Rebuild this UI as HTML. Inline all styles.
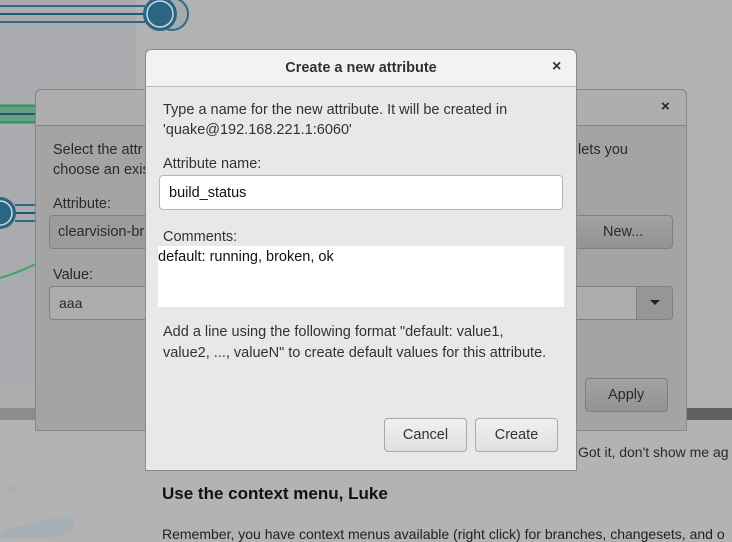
<!DOCTYPE html>
<html><head><style>
*{box-sizing:border-box;margin:0;padding:0}
body{width:732px;height:538px;overflow:hidden;background:#b3b3b3;font-family:"Liberation Sans","DejaVu Sans",sans-serif;font-size:14.5px;color:#2e3436;position:relative}
.a{position:absolute}
.t{position:absolute;white-space:nowrap}
</style></head><body>
<div class="a" style="left:0;top:0;width:136px;height:385px;background:#a9abaf"></div>
<div class="a" style="left:136px;top:0;width:596px;height:408px;background:#b2b2b2"></div>
<div class="a" style="left:0;top:385px;width:136px;height:23px;background:#adadad"></div>
<div class="a" style="left:0;top:408px;width:40px;height:12px;background:#8b8c8c"></div>
<div class="a" style="left:680px;top:408px;width:52px;height:12px;background:#5e6163"></div>
<svg class="a" style="left:0;top:0" width="200" height="330">
<line x1="0" y1="6" x2="145" y2="6" stroke="#2f6b88" stroke-width="2"/>
<line x1="0" y1="14" x2="145" y2="14" stroke="#1e5a78" stroke-width="2"/>
<line x1="0" y1="22" x2="145" y2="22" stroke="#2f6b88" stroke-width="2"/>
<circle cx="172" cy="14" r="16" fill="#a5aaae" stroke="#2f6b88" stroke-width="2"/>
<circle cx="160" cy="14" r="17" fill="#2a6583"/>
<circle cx="160" cy="14" r="13" fill="none" stroke="#d0d8dc" stroke-width="1.5"/>
<rect x="0" y="104" width="40" height="20" fill="#6a9f86"/>
<line x1="0" y1="106" x2="40" y2="106" stroke="#2f9a5e" stroke-width="2"/>
<line x1="0" y1="114" x2="40" y2="114" stroke="#1e5a78" stroke-width="2"/>
<line x1="0" y1="122" x2="40" y2="122" stroke="#2f9a5e" stroke-width="2"/>
<line x1="15" y1="205" x2="40" y2="205" stroke="#2f6b88" stroke-width="2"/>
<line x1="15" y1="213" x2="40" y2="213" stroke="#1e5a78" stroke-width="2"/>
<line x1="15" y1="221" x2="40" y2="221" stroke="#2f6b88" stroke-width="2"/>
<circle cx="0" cy="213" r="16" fill="#2a6583"/>
<circle cx="0" cy="213" r="12" fill="none" stroke="#d0d8dc" stroke-width="1.5"/>
<path d="M0 278 Q20 272 40 262" stroke="#3aa56b" stroke-width="2" fill="none"/>
</svg>
<svg class="a" style="left:0;top:480" width="80" height="58"><path d="M10 58 L65 45" stroke="#a6b0b4" stroke-width="18" stroke-linecap="round"/><circle cx="12" cy="10" r="4" fill="#a8b0b4"/></svg>
<div class="t" style="left:578px;top:444px;font-size:14px;color:#2a2a2a">Got it, don't show me ag</div>
<div class="t" style="left:162px;top:484px;font-size:17px;font-weight:bold;color:#111">Use the context menu, Luke</div>
<div class="t" style="left:162px;top:526px;font-size:14px;color:#222">Remember, you have context menus available (right click) for branches, changesets, and o</div>

<div class="a" style="left:35px;top:89px;width:652px;height:342px;background:#a4a4a4;border:1px solid #888;border-radius:6px 6px 0 0"></div>
<div class="a" style="left:36px;top:90px;width:650px;height:36px;background:#aeaeae;border-bottom:1px solid #858585;border-radius:6px 6px 0 0"></div>
<div class="t" style="left:661px;top:98px;font-size:15px;font-weight:bold;color:#222">×</div>
<div class="t" style="left:53px;top:142px;color:#2a2a2a">Select the attr</div>
<div class="t" style="left:53px;top:162px;color:#2a2a2a">choose an exis</div>
<div class="t" style="left:578px;top:142px;color:#2a2a2a">lets you</div>
<div class="t" style="left:53px;top:196px;color:#2a2a2a">Attribute:</div>
<div class="a" style="left:49px;top:215px;width:110px;height:34px;background:#9c9c9c;border:1px solid #808080;border-radius:4px"></div>
<div class="t" style="left:58px;top:224px;color:#2a2a2a">clearvision-bra</div>
<div class="a" style="left:576px;top:215px;width:97px;height:34px;background:linear-gradient(#a2a2a2,#939393);border:1px solid #7f7f7f;border-radius:0 4px 4px 0"></div>
<div class="t" style="left:603px;top:224px;color:#2a2a2a">New...</div>
<div class="t" style="left:53px;top:267px;color:#2a2a2a">Value:</div>
<div class="a" style="left:49px;top:286px;width:110px;height:34px;background:#adadad;border:1px solid #808080;border-radius:4px 0 0 4px"></div>
<div class="t" style="left:59px;top:295px;color:#2a2a2a;font-size:14px">aaa</div>
<div class="a" style="left:576px;top:286px;width:62px;height:34px;background:#adadad;border:1px solid #808080;border-left:none"></div>
<div class="a" style="left:636px;top:286px;width:37px;height:34px;background:#969696;border:1px solid #808080;border-radius:0 4px 4px 0"></div>
<div class="a" style="left:650px;top:300px;border-left:5px solid transparent;border-right:5px solid transparent;border-top:5px solid #222"></div>
<div class="a" style="left:585px;top:378px;width:83px;height:34px;background:linear-gradient(#a2a2a2,#939393);border:1px solid #7f7f7f;border-radius:4px"></div>
<div class="t" style="left:608px;top:387px;color:#2a2a2a">Apply</div>

<div class="a" style="left:145px;top:49px;width:432px;height:422px;background:#e8e8e7;border:1px solid #8a8a8a;border-radius:6px 6px 0 0"></div>
<div class="a" style="left:146px;top:50px;width:430px;height:37px;background:#f2f2f2;border-bottom:1px solid #b8b8b8;border-radius:6px 6px 0 0"></div>
<div class="t" style="left:146px;top:60px;width:430px;text-align:center;font-weight:bold;color:#2e3436">Create a new attribute</div>
<div class="t" style="left:552px;top:58px;font-size:16px;font-weight:bold;color:#2e3436">×</div>
<div class="t" style="left:163px;top:102px">Type a name for the new attribute. It will be created in</div>
<div class="t" style="left:163px;top:122px">'quake@192.168.221.1:6060'</div>
<div class="t" style="left:163px;top:156px">Attribute name:</div>
<div class="a" style="left:159px;top:175px;width:404px;height:35px;background:#fff;border:1px solid #b6b6b3;border-radius:4px"></div>
<div class="t" style="left:169px;top:185px;color:#111">build_status</div>
<div class="t" style="left:163px;top:229px">Comments:</div>
<div class="a" style="left:158px;top:246px;width:406px;height:61px;background:#fff"></div>
<div class="t" style="left:158px;top:249px;color:#111">default: running, broken, ok</div>
<div class="t" style="left:163px;top:324px">Add a line using the following format "default: value1,</div>
<div class="t" style="left:163px;top:345px">value2, ..., valueN" to create default values for this attribute.</div>
<div class="a" style="left:384px;top:418px;width:83px;height:34px;background:linear-gradient(#f0f0ef,#e0e0de);border:1px solid #a8a8a6;border-radius:4px"></div>
<div class="t" style="left:384px;top:427px;width:83px;text-align:center">Cancel</div>
<div class="a" style="left:475px;top:418px;width:83px;height:34px;background:linear-gradient(#f0f0ef,#e0e0de);border:1px solid #a8a8a6;border-radius:4px"></div>
<div class="t" style="left:475px;top:427px;width:83px;text-align:center">Create</div>
</body></html>
